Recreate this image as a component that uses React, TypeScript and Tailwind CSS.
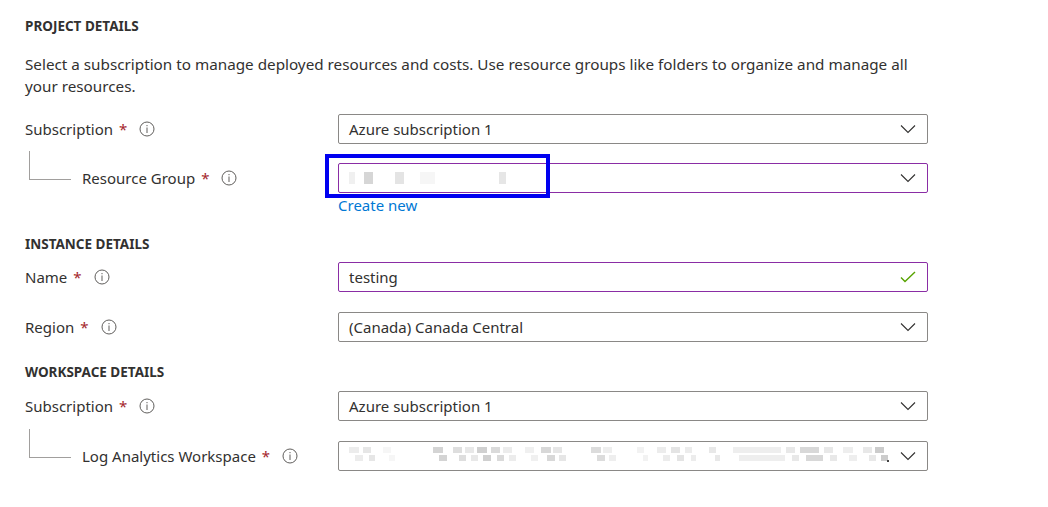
import React from "react";

const font = { fontFamily: '"Segoe UI", "Noto Sans", "Open Sans", sans-serif' };

function Info() {
  return (
    <svg width="16" height="16" viewBox="0 0 16 16" className="shrink-0">
      <circle cx="8" cy="8" r="7" fill="none" stroke="#605e5c" strokeWidth="1" />
      <rect x="7.5" y="4" width="1" height="1.2" fill="#605e5c" />
      <rect x="7.5" y="6.5" width="1" height="5.5" fill="#605e5c" />
    </svg>
  );
}

function Chevron() {
  return (
    <svg width="16" height="10" viewBox="0 0 16 10" className="shrink-0">
      <path d="M1 1.5 L8 8.5 L15 1.5" fill="none" stroke="#323130" strokeWidth="1.1" />
    </svg>
  );
}

function Check() {
  return (
    <svg width="16" height="12" viewBox="0 0 16 12" className="shrink-0">
      <path d="M1 6.5 L5 10.5 L15 1" fill="none" stroke="#57a300" strokeWidth="1.4" />
    </svg>
  );
}

function Label({ text, indent }: { text: string; indent?: boolean }) {
  return (
    <div className={"relative flex w-[313px] shrink-0 items-center " + (indent ? "pl-[57px]" : "")}>
      {indent && (
        <div className="absolute left-[4px] top-[-16px] h-[29px] w-[42px] border-b border-l border-[#a19f9d]" />
      )}
      <span className="text-[15px] text-[#323130]">{text}</span>
      <span className="ml-[6px] text-[15px] text-[#a4262c]">*</span>
      <span className="ml-[12px] flex items-center">
        <Info />
      </span>
    </div>
  );
}

function Box({ children, purple, icon = "chevron" }: { children?: React.ReactNode; purple?: boolean; icon?: "chevron" | "check" }) {
  return (
    <div
      className={
        "flex h-[30px] w-[590px] items-center justify-between rounded-[2px] border pl-[10px] pr-[11px] " +
        (purple ? "border-[#8a2da5]" : "border-[#8a8886]")
      }
    >
      <div className="flex min-w-0 items-center text-[15px] text-[#323130]">{children}</div>
      {icon === "chevron" ? <Chevron /> : <Check />}
    </div>
  );
}

function Blocks({ items }: { items: [number, number, string][] }) {
  return (
    <div className="relative h-[20px] w-[540px]">
      {items.map(([x, w, c], i) => (
        <div key={i} className="absolute top-[4px] h-[12px]" style={{ left: x, width: w, background: c }} />
      ))}
    </div>
  );
}

function Row({ label, indent, children }: { label: string; indent?: boolean; children: React.ReactNode }) {
  return (
    <div className="flex items-center">
      <Label text={label} indent={indent} />
      {children}
    </div>
  );
}

function Heading({ children }: { children: React.ReactNode }) {
  return <div className="text-[13.5px] font-bold leading-[20px] text-[#323130]">{children}</div>;
}

const laTop: [number, number, string][] = [
  [0, 10, "#ececec"], [14, 8, "#e6e6e6"], [34, 8, "#f6f6f6"], [84, 10, "#d4d4d4"], [104, 9, "#dedede"], [116, 9, "#e8e8e8"], [128, 10, "#d0d0d0"], [142, 9, "#dadada"], [154, 9, "#ececec"], [176, 9, "#f0f0f0"], [192, 10, "#d8d8d8"], [204, 9, "#e6e6e6"], [242, 10, "#dcdcdc"], [254, 9, "#eeeeee"], [288, 7, "#f2f2f2"], [308, 9, "#ececec"], [322, 9, "#e4e4e4"], [336, 7, "#ececec"], [360, 7, "#e8e8e8"], [384, 48, "#eeeeee"], [437, 9, "#e8e8e8"], [451, 19, "#d8d8d8"], [475, 9, "#e8e8e8"], [494, 10, "#eeeeee"], [514, 9, "#e8e8e8"], [526, 9, "#cccccc"],
];

export default function App() {
  return (
    <div style={font} className="relative h-[507px] w-[1048px] bg-white pl-[25px] pt-[16px]">
      <Heading>PROJECT DETAILS</Heading>
      <p className="mt-[17px] w-[900px] text-[15.25px] leading-[22px] text-[#323130]">
        Select a subscription to manage deployed resources and costs. Use resource groups like folders to organize and manage all your resources.
      </p>
      <div className="mt-[17px]">
        <Row label="Subscription">
          <Box>Azure subscription 1</Box>
        </Row>
      </div>
      <div className="mt-[19px]">
        <Row label="Resource Group" indent>
          <Box purple>
            <Blocks
              items={[
                [0, 6, "#f0f0f0"],
                [15, 9, "#d6d6d6"],
                [46, 9, "#e4e4e4"],
                [71, 15, "#f6f6f6"],
                [150, 7, "#e6e6e6"],
              ]}
            />
          </Box>
        </Row>
      </div>
      <div className="ml-[313px] mt-[1px] text-[15px] leading-[22px] text-[#0078d4]">Create new</div>
      <div className="mt-[18px]">
        <Heading>INSTANCE DETAILS</Heading>
      </div>
      <div className="mt-[8px]">
        <Row label="Name">
          <Box purple icon="check">
            testing
          </Box>
        </Row>
      </div>
      <div className="mt-[20px]">
        <Row label="Region">
          <Box>(Canada) Canada Central</Box>
        </Row>
      </div>
      <div className="mt-[20px]">
        <Heading>WORKSPACE DETAILS</Heading>
      </div>
      <div className="mt-[9px]">
        <Row label="Subscription">
          <Box>Azure subscription 1</Box>
        </Row>
      </div>
      <div className="mt-[20px]">
        <Row label="Log Analytics Workspace" indent>
          <Box>
            <div className="relative h-[24px] w-[545px]">
              {laTop.map(([x, w, c], i) => (
                <div key={i} className="absolute top-[3px] h-[6px]" style={{ left: x, width: w, background: c }} />
              ))}
              {laTop.map(([x, w, c], i) => (
                <div key={"b" + i} className="absolute top-[11px] h-[6px]" style={{ left: x + 6, width: Math.max(4, w - 2), background: c }} />
              ))}
              <div className="absolute left-[538px] top-[16px] h-[2px] w-[2px] bg-[#444]" />
            </div>
          </Box>
        </Row>
      </div>
      <div className="absolute left-[325px] top-[154px] h-[44px] w-[225px] border-[4px] border-[#0000f0]" />
    </div>
  );
}
